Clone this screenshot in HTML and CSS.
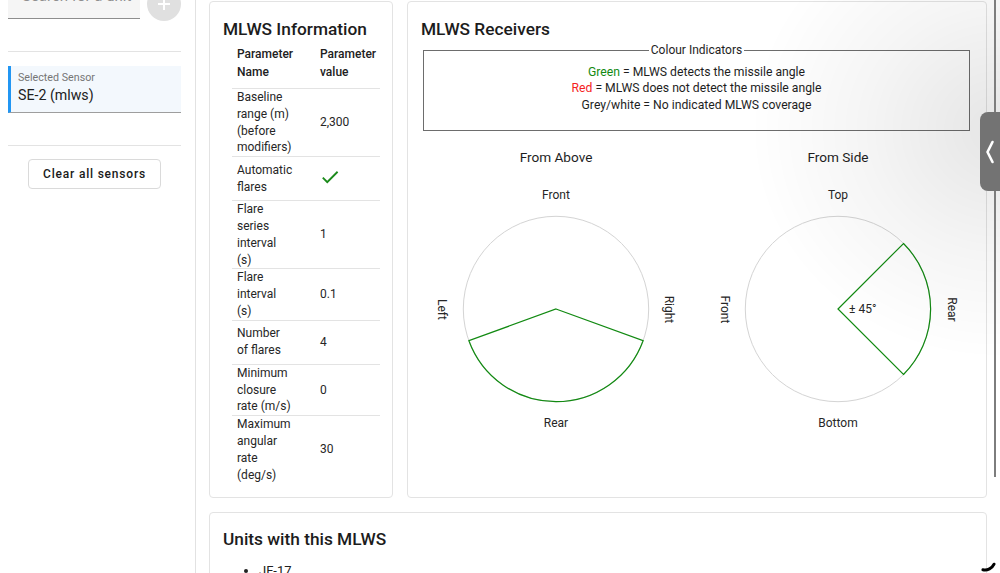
FILE: index.html
```html
<!DOCTYPE html>
<html lang="en">
<head>
<meta charset="utf-8">
<title>MLWS</title>
<link rel="stylesheet" href="styles.css">
</head>
<body>
<div class="app">
  <aside class="sidebar">
    <div class="search-row">
      <div class="search-field">Search for a unit</div>
      <div class="add-btn"><span class="plus-h"></span><span class="plus-v"></span></div>
    </div>
    <div class="divider d1"></div>
    <div class="selected">
      <div class="sel-label">Selected Sensor</div>
      <div class="sel-value">SE-2 (mlws)</div>
    </div>
    <div class="divider d2"></div>
    <button class="clear-btn">Clear all sensors</button>
  </aside>

  <main class="main">
    <div class="top-row">
      <section class="card info">
        <h2 class="card-title">MLWS Information</h2>
        <table class="info-table">
          <colgroup><col class="c1"><col class="c2"></colgroup>
          <thead>
            <tr><th>Parameter<br>Name</th><th>Parameter<br>value</th></tr>
          </thead>
          <tbody>
            <tr><td>Baseline<br>range (m)<br>(before<br>modifiers)</td><td>2,300</td></tr>
            <tr><td>Automatic<br>flares</td><td><svg class="check" viewBox="0 0 24 24"><path d="M9 16.17L4.830 12l-1.42 1.41L9 19 21 7l-1.41-1.41z"/></svg></td></tr>
            <tr><td>Flare<br>series<br>interval<br>(s)</td><td>1</td></tr>
            <tr><td>Flare<br>interval<br>(s)</td><td>0.1</td></tr>
            <tr><td>Number<br>of flares</td><td>4</td></tr>
            <tr><td>Minimum<br>closure<br>rate (m/s)</td><td>0</td></tr>
            <tr><td>Maximum<br>angular<br>rate<br>(deg/s)</td><td>30</td></tr>
          </tbody>
        </table>
      </section>

      <section class="card receivers">
        <h2 class="card-title">MLWS Receivers</h2>
        <fieldset class="legend-box">
          <legend>Colour Indicators</legend>
          <div><span class="green">Green</span> = MLWS detects the missile angle</div>
          <div><span class="red">Red</span> = MLWS does not detect the missile angle</div>
          <div>Grey/white = No indicated MLWS coverage</div>
        </fieldset>
        <div class="diagrams">
          <div class="diagram">
            <div class="diagram-title">From Above</div>
            <svg class="dia" viewBox="0 0 260 250" width="260" height="250">
              <circle cx="130" cy="129" r="92.7" class="ring"/>
              <path class="sector" d="M130 129 L217.1 160.7 A92.7 92.7 0 0 1 42.9 160.7 Z"/>
              <text x="130" y="19" class="lbl" text-anchor="middle">Front</text>
              <text x="130" y="246.5" class="lbl" text-anchor="middle">Rear</text>
              <text x="16" y="129.5" class="lbl" text-anchor="middle" dominant-baseline="central" transform="rotate(90 16 129.5)">Left</text>
              <text x="242.5" y="129.5" class="lbl" text-anchor="middle" dominant-baseline="central" transform="rotate(90 242.5 129.5)">Right</text>
            </svg>
          </div>
          <div class="diagram">
            <div class="diagram-title">From Side</div>
            <svg class="dia" viewBox="0 0 260 250" width="260" height="250">
              <circle cx="130" cy="129" r="92.7" class="ring"/>
              <path class="sector" d="M130 129 L195.5 63.5 A92.7 92.7 0 0 1 195.5 194.5 Z"/>
              <text x="130" y="19" class="lbl" text-anchor="middle">Top</text>
              <text x="130" y="246.5" class="lbl" text-anchor="middle">Bottom</text>
              <text x="17" y="129.5" class="lbl" text-anchor="middle" dominant-baseline="central" transform="rotate(90 17 129.5)">Front</text>
              <text x="243.5" y="129.5" class="lbl" text-anchor="middle" dominant-baseline="central" transform="rotate(90 243.5 129.5)">Rear</text>
              <text x="141" y="133" class="lbl">± 45°</text>
            </svg>
          </div>
        </div>
      </section>
    </div>

    <section class="card units">
      <h2 class="card-title">Units with this MLWS</h2>
      <ul class="unit-list">
        <li>JF-17</li>
      </ul>
    </section>
  </main>
</div>

<div class="drawer-shade"></div>
<div class="drawer-edge"></div>
<div class="drawer-tab">
  <svg viewBox="0 0 20 79" width="20" height="79"><path d="M12.5 30 L7.5 40 L12.5 50" fill="none" stroke="#fff" stroke-width="2.6" stroke-linecap="round" stroke-linejoin="round"/></svg>
</div>
<svg class="spinner" viewBox="0 0 30 28" width="30" height="28"><path d="M24.06 19.23 A10 10 0 0 1 12.92 24.78" fill="none" stroke="#000" stroke-width="3" stroke-linecap="round"/></svg>
</body>
</html>
```

FILE: styles.css
```css
* { box-sizing: border-box; }

html, body {
  margin: 0;
  height: 573px;
  overflow: hidden;
  background: #fff;
}

body {
  font-family: Roboto, "Liberation Sans", sans-serif;
  color: #212121;
}

.app {
  display: flex;
  height: 573px;
}

/* Sidebar */
.sidebar {
  width: 196px;
  flex-shrink: 0;
  border-right: 1px solid #e2e2e2;
  padding: 0 14px 0 8px;
}

.search-row {
  display: flex;
  align-items: flex-start;
  margin-top: -22px;
}

.search-field {
  width: 133px;
  height: 41px;
  background: #f5f5f5;
  border-bottom: 1px solid #8d8d8d;
  border-radius: 4px 4px 0 0;
  padding: 9px 0 0 14px;
  font-size: 15px;
  line-height: 18px;
  color: #8f8f8f;
  white-space: nowrap;
  overflow: hidden;
}

.add-btn {
  width: 34px;
  height: 34px;
  margin: 9px 0 0 7px;
  border-radius: 50%;
  background: #e0e0e0;
  position: relative;
  flex-shrink: 0;
}

.plus-h, .plus-v {
  position: absolute;
  background: #fff;
}
.plus-h { left: 11px; top: 16px; width: 12px; height: 2px; }
.plus-v { left: 16px; top: 11px; width: 2px; height: 12px; }

.divider {
  height: 1px;
  background: #e3e3e3;
}
.d1 { margin-top: 30px; }
.d2 { margin-top: 32px; }

.selected {
  margin-top: 14px;
  height: 47px;
  background: #f3f8fd;
  border-left: 3px solid #2196f3;
  border-bottom: 1px solid #9e9e9e;
  padding: 5px 0 0 7px;
}

.sel-label {
  font-size: 10.7px;
  line-height: 13px;
  color: #757575;
}

.sel-value {
  margin-top: 2px;
  font-size: 14.2px;
  line-height: 19px;
  color: #212121;
}

.clear-btn {
  display: block;
  margin: 13px 0 0 20px;
  width: 133px;
  height: 30px;
  background: #fff;
  border: 1px solid #dadada;
  border-radius: 4px;
  font-family: Roboto, "Liberation Sans", sans-serif;
  font-size: 12px;
  font-weight: 500;
  letter-spacing: 0.8px;
  color: #1a1a1a;
  padding: 0;
}

/* Main */
.main {
  width: 791px;
  flex-shrink: 0;
  padding: 1px 0 0 13px;
  display: flex;
  flex-direction: column;
}

.top-row {
  display: flex;
  gap: 14px;
  align-items: stretch;
}

.card {
  border: 1px solid #e3e3e3;
  border-radius: 4px;
  background: #fff;
  padding: 17px 14px 14px 13px;
}

.card-title {
  margin: 0;
  font-size: 17.3px;
  font-weight: 500;
  line-height: 20px;
  color: #1c1c1c;
}

.info {
  width: 184px;
  flex-shrink: 0;
}

.receivers {
  flex: 1;
}

/* table */
.info-table {
  border-collapse: collapse;
  table-layout: fixed;
  width: 148px;
  margin-left: 9px;
  font-size: 12px;
}

.info-table col.c1 { width: 83px; }
.info-table col.c2 { width: 65px; }

.info-table th {
  font-weight: 500;
  text-align: left;
  line-height: 18px;
  padding: 6px 5px 7px;
  border-bottom: 1px solid #e3e3e3;
  white-space: nowrap;
}

.info-table td {
  line-height: 16.8px;
  padding: 0 5px;
  height: 44px;
  border-bottom: 1px solid #e3e3e3;
  vertical-align: middle;
  white-space: nowrap;
  color: #262626;
}

.info-table tbody tr:last-child td {
  border-bottom: none;
}

.check {
  display: block;
  width: 22px;
  height: 22px;
  margin: -4px 0 0 -1px;
  fill: #1b8a1b;
}

/* legend */
.legend-box {
  margin: 4px 2px 0;
  padding: 6.5px 12px 16.5px;
  border: 1px solid #6d6d6d;
  text-align: center;
  font-size: 12.2px;
  line-height: 16.8px;
  color: #1e1e1e;
}

.legend-box legend {
  margin: 0 auto;
  padding: 0 2px;
  font-size: 12px;
  line-height: 14px;
}

.green { color: #128a12; }
.red { color: #f51f1f; }

/* diagrams */
.diagrams {
  display: grid;
  grid-template-columns: 260px 260px;
  column-gap: 22px;
  margin: 17px 0 0 5px;
}

.diagram-title {
  text-align: center;
  font-size: 13.6px;
  line-height: 18px;
  color: #1e1e1e;
}

.dia {
  display: block;
  margin-top: 14px;
}

.ring {
  fill: none;
  stroke: #d4d4d4;
  stroke-width: 1;
}

.sector {
  fill: none;
  stroke: #128a12;
  stroke-width: 1.2;
  stroke-linejoin: miter;
}

.lbl {
  font-family: Roboto, "Liberation Sans", sans-serif;
  font-size: 12px;
  fill: #262626;
}

/* units */
.units {
  margin-top: 14px;
  padding-top: 16px;
  padding-bottom: 0;
  height: 120px;
}

.unit-list {
  margin: 13px 0 0;
  padding-left: 36px;
  font-size: 13px;
  line-height: 18px;
}

/* drawer overlay on the right edge */
.drawer-shade {
  position: fixed;
  left: 0;
  top: 0;
  width: 1000px;
  height: 573px;
  pointer-events: none;
  background: radial-gradient(ellipse 250px 230px at 1000px 130px, rgba(0,0,0,0.1), rgba(0,0,0,0.04) 55%, rgba(0,0,0,0) 100%);
}

.drawer-edge {
  position: fixed;
  left: 994px;
  top: 0;
  width: 2px;
  height: 477px;
  background: #7d7d7d;
}

.drawer-tab {
  position: fixed;
  left: 980px;
  top: 112px;
  width: 20px;
  height: 79px;
  background: #737373;
  border-radius: 8px 0 0 8px;
}

.drawer-tab svg { display: block; }

.spinner {
  position: fixed;
  left: 970px;
  top: 545px;
}
```
